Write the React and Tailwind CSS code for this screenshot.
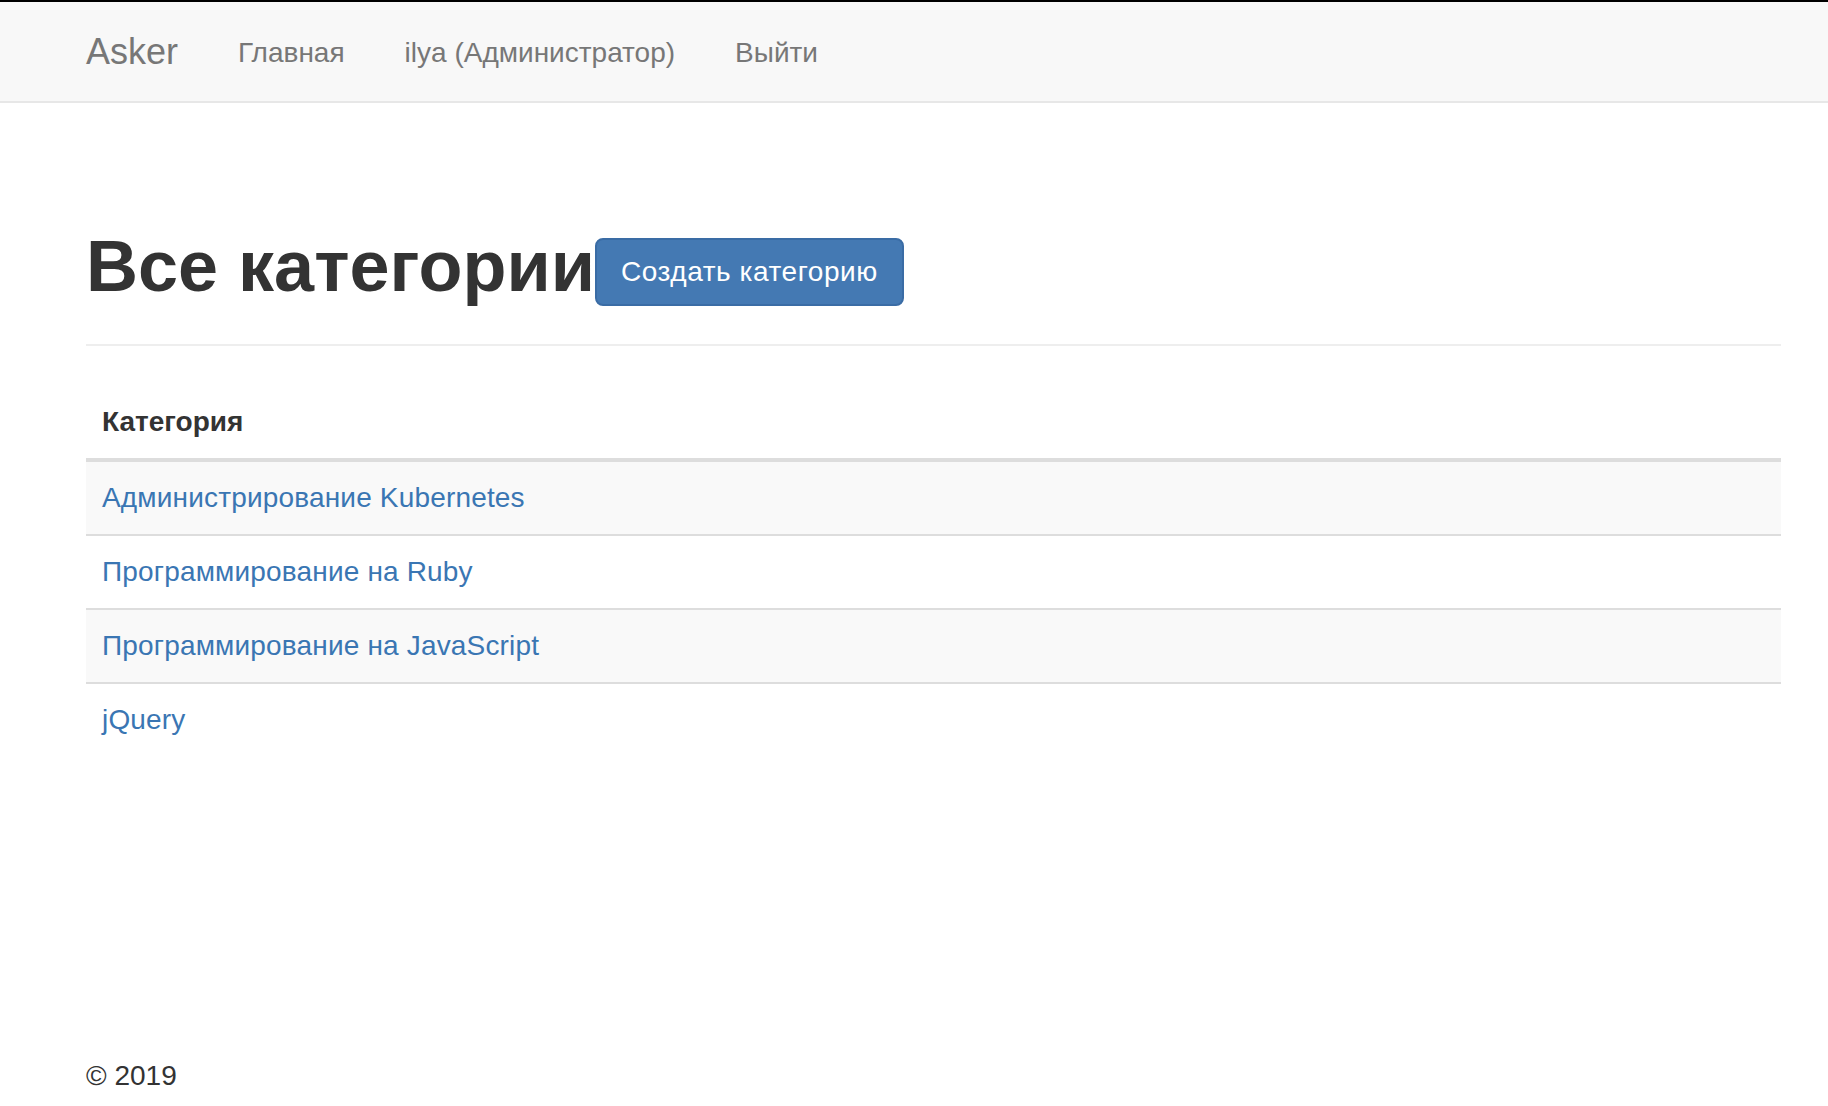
import React from 'react';

const categories = [
  'Администрирование Kubernetes',
  'Программирование на Ruby',
  'Программирование на JavaScript',
  'jQuery',
];

const navLinks = ['Главная', 'ilya (Администратор)', 'Выйти'];

export default function App() {
  return (
    <div className="min-h-screen bg-white text-[#333] font-['Liberation_Sans',Arial,sans-serif]">
      <div className="h-[2px] bg-black" />

      {/* Navbar */}
      <nav className="h-[101px] bg-[#f8f8f8] border-b-2 border-[#e7e7e7]">
        <div className="flex items-center h-full pl-[86px]">
          <a href="#" className="pr-[30px] text-[36px] leading-[40px] text-[#777]">
            Asker
          </a>
          <ul className="flex">
            {navLinks.map((link) => (
              <li key={link}>
                <a href="#" className="block px-[30px] pt-[2px] text-[28px] leading-[40px] text-[#777]">
                  {link}
                </a>
              </li>
            ))}
          </ul>
        </div>
      </nav>

      <main className="ml-[86px] mr-[47px]">
        {/* Page header */}
        <div className="mt-[124px] pb-[38px] border-b-2 border-[#eee]">
          <h1 className="text-[72px] leading-[79px] font-bold">
            Все категории
            <button className="inline-block align-middle h-[68px] px-[24px] text-[28px] leading-[40px] font-normal tracking-[0.55px] text-white bg-[#4479b3] border-2 border-[#3a6ca5] rounded-[8px]">
              Создать категорию
            </button>
          </h1>
        </div>

        {/* Categories table */}
        <table className="w-full mt-[40px] border-collapse text-[28px] leading-[40px]">
          <thead>
            <tr>
              <th className="px-[16px] py-[16px] text-left font-bold border-b-4 border-[#ddd]">Категория</th>
            </tr>
          </thead>
          <tbody>
            {categories.map((name, i) => (
              <tr
                key={name}
                className={`${i % 2 === 0 ? 'bg-[#f9f9f9]' : 'bg-white'} ${i < categories.length - 1 ? 'border-b-2 border-[#ddd]' : ''}`}
              >
                <td className="px-[16px] py-[16px]">
                  <a href="#" className="text-[#3a76b3] tracking-[0.17px]">
                    {name}
                  </a>
                </td>
              </tr>
            ))}
          </tbody>
        </table>

        {/* Footer */}
        <footer className="mt-[300px] pb-[10px] text-[28px] leading-[40px]">© 2019</footer>
      </main>
    </div>
  );
}
